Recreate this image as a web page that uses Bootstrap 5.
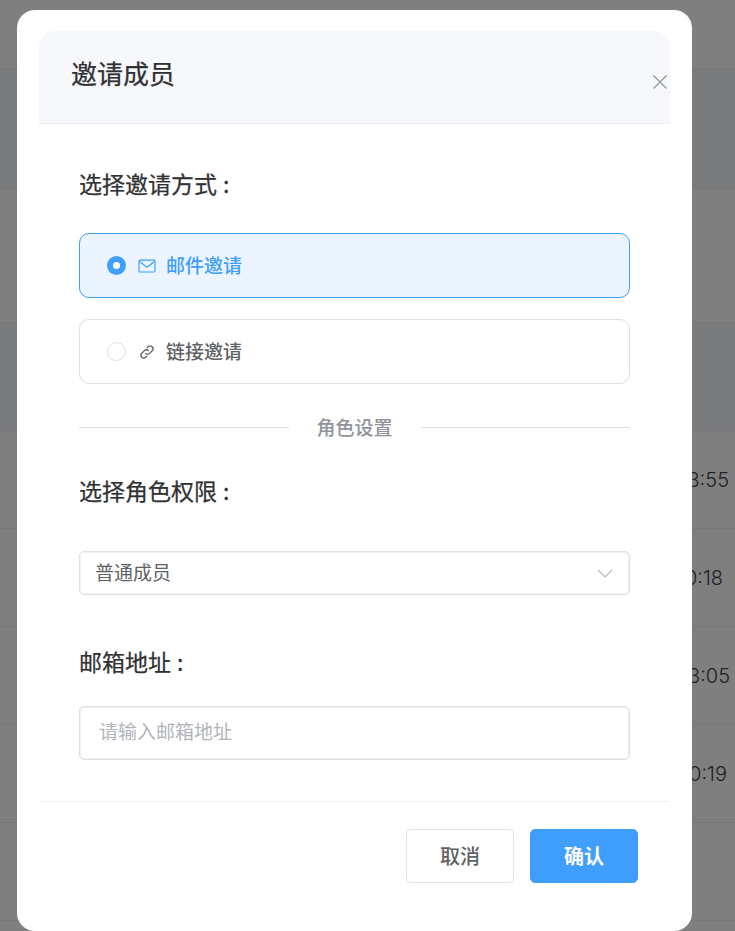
<!DOCTYPE html>
<html lang="zh-CN">
<head>
    <meta charset="UTF-8">
    <meta name="viewport" content="width=device-width, initial-scale=1.0">
    <title>邀请成员</title>
    <link rel="stylesheet" href="https://cdn.jsdelivr.net/npm/bootstrap@5.3.0/dist/css/bootstrap.min.css">
    <style>
        html, body { height: 100%; overflow: hidden; }
        body { font-family: "Noto Sans CJK SC", "Noto Sans", sans-serif; color: #303133; background: #fff; }
        .page-rows { height: 931px; overflow: hidden; }
        .page-row { border-bottom: 1px solid #ebeef5; font-family: Inter, "Open Sans", sans-serif; font-size: 20px; font-weight: 300; color: #444; padding-right: 5px; }
        .page-row-shade { background: #f5f7fa; }
        .dim-layer { position: absolute; inset: 0; background: rgba(0, 0, 0, .5); }
        .invite-dialog { position: absolute; left: 17px; top: 10px; width: 675px; height: 921px; background: #fff; border: 0; border-radius: 18px; padding: 21px 22px 0; }
        .invite-head { height: 93px; background: #f7f8fc; border-bottom: 1px solid #ebeef5; border-radius: 16px 16px 0 0; padding: 0 32px; }
        .invite-title { font-size: 26px; font-weight: 400; -webkit-text-stroke: .25px #303133; line-height: 36px; margin: 0; color: #303133; padding-top: 24px; }
        .close-x { position: absolute; left: 636px; top: 65px; width: 14px; height: 14px; display: block; }
        .invite-body { padding: 0 40px; height: 678px; border-bottom: 1px solid #ebeef5; }
        .field-label { font-size: 23px; font-weight: 400; -webkit-text-stroke: .25px #303133; line-height: 32px; color: #303133; margin: 0; }
        .label-colon { margin-left: 6px; }
        .way-box { height: 65px; border: 1px solid #dcdfe6; border-radius: 10px; padding-left: 27px; font-size: 19px; color: #606266; font-weight: 500; line-height: 26px; }
        .way-on { background: #ecf5ff; border-color: #409eff; color: #409eff; }
        .way-dot { width: 19px; height: 19px; border-radius: 50%; border: 1px solid #dcdfe6; background: #fff; flex: none; }
        .way-on .way-dot { border: 6px solid #409eff; }
        .way-icon { width: 18px; height: 18px; margin: 0 10px 0 12px; flex: none; }
        .way-text { display: block; margin-top: -2px; }
        .split-row { font-size: 19px; line-height: 28px; color: #909399; font-weight: 500; }
        .split-line { flex: 1; height: 1px; background: #dcdfe6; }
        .role-select { height: 44px; border: 1px solid #dcdfe6; box-shadow: inset 0 0 0 1px #f0f1f5; border-radius: 5px; padding: 0 0 0 15px; font-size: 19px; color: #606266; line-height: 26px; }
        .role-text { display: block; margin-top: -2px; }
        .email-input.form-control { height: 54px; border: 1px solid #dcdfe6; box-shadow: inset 0 0 0 1px #f0f1f5; border-radius: 5px; padding: 0 19px 5px; font-size: 19px; color: #606266; }
        .email-input.form-control::placeholder { color: #b0b3bb; }
        .invite-foot { padding: 27px 32px 0 0; }
        .foot-btn.btn { width: 108px; height: 54px; font-size: 20px; font-weight: 500; border-radius: 5px; padding: 0; }
        .foot-cancel.btn { background: #fff; border: 1px solid #dcdfe6; color: #606266; }
        .foot-ok.btn { background: #409eff; border: 1px solid #409eff; color: #fff; font-weight: 700; }
    </style>
</head>
<body>
    <div class="page-rows">
        <div class="page-row" style="height: 69px"></div>
        <div class="page-row page-row-shade" style="height: 120px"></div>
        <div class="page-row" style="height: 134px"></div>
        <div class="page-row page-row-shade" style="height: 108px"></div>
        <div class="page-row d-flex align-items-center justify-content-end" style="height: 98px"><span style="padding-right: 1px">13:55</span></div>
        <div class="page-row d-flex align-items-center justify-content-end" style="height: 98px"><span style="padding-right: 7px">10:18</span></div>
        <div class="page-row d-flex align-items-center justify-content-end" style="height: 98px"><span>13:05</span></div>
        <div class="page-row d-flex align-items-center justify-content-end" style="height: 98px"><span style="padding-right: 3px">10:19</span></div>
        <div class="page-row" style="height: 98px"></div>
    </div>
    <div class="dim-layer"></div>

    <div class="invite-dialog">
        <div class="invite-head">
            <h5 class="invite-title">邀请成员</h5>
        </div>
        <svg class="close-x" viewBox="0 0 14 14" fill="none" stroke="#909399" stroke-width="1.2"><path d="M.5.5l13 13M13.5.5l-13 13"/></svg>

        <div class="invite-body">
            <p class="field-label" style="padding-top: 43px; height: 109px">选择邀请方式<span class="label-colon">:</span></p>

            <div class="way-box way-on d-flex align-items-center">
                <span class="way-dot"></span>
                <svg class="way-icon" viewBox="0 0 18 18" fill="none" stroke="#409eff" stroke-width="1.2"><rect x="1" y="3.2" width="16" height="11.8" rx="1.2"/><path d="M1.6 4.5 9 10.2l7.4-5.7"/></svg>
                <span class="way-text">邮件邀请</span>
            </div>
            <div class="way-box d-flex align-items-center" style="margin-top: 21px">
                <span class="way-dot"></span>
                <svg class="way-icon" viewBox="0 0 18 18" fill="none" stroke="#606266" stroke-width="1.3" stroke-linecap="round"><path d="M7.6 10.4a2.8 2.8 0 0 0 4 0l2.6-2.6a2.8 2.8 0 0 0-4-4L9.1 4.9"/><path d="M10.4 7.6a2.8 2.8 0 0 0-4 0l-2.6 2.6a2.8 2.8 0 0 0 4 4l1.1-1.1"/></svg>
                <span class="way-text">链接邀请</span>
            </div>

            <div class="split-row d-flex align-items-center" style="margin-top: 29px">
                <span class="split-line"></span>
                <span style="padding: 0 28px">角色设置</span>
                <span class="split-line"></span>
            </div>

            <p class="field-label" style="margin-top: 33px">选择角色权限<span class="label-colon">:</span></p>
            <div class="role-select d-flex align-items-center justify-content-between" style="margin-top: 45px">
                <span class="role-text">普通成员</span>
                <svg width="16" height="9" viewBox="0 0 16 9" fill="none" stroke="#b4b7bf" stroke-width="1.1" style="margin-right: 16px"><path d="M1 1l7 7 7-7"/></svg>
            </div>

            <p class="field-label" style="margin-top: 50px">邮箱地址<span class="label-colon">:</span></p>
            <input class="form-control email-input" type="text" placeholder="请输入邮箱地址" style="margin-top: 29px">
        </div>

        <div class="invite-foot d-flex justify-content-end gap-3">
            <button class="btn foot-btn foot-cancel">取消</button>
            <button class="btn foot-btn foot-ok">确认</button>
        </div>
    </div>

    <script src="https://cdn.jsdelivr.net/npm/bootstrap@5.3.0/dist/js/bootstrap.bundle.min.js"></script>
</body>
</html>
